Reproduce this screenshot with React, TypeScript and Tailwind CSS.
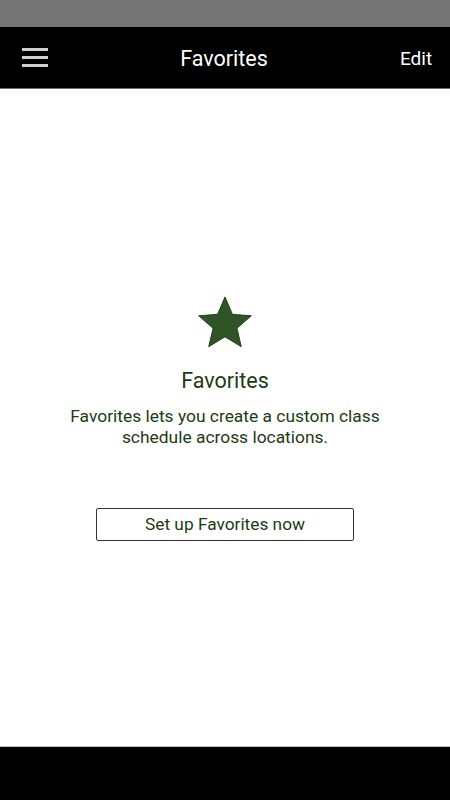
import React from "react";

export default function App() {
  return (
    <div className="flex h-[800px] w-[450px] flex-col bg-white" style={{ fontFamily: "Roboto, 'Liberation Sans', sans-serif" }}>
      <div className="h-[27px] bg-[#757575]" />
      <div className="flex h-[62px] items-center justify-between border-b border-[#6e6e6e] bg-black px-[18px] pt-[4px]">
        <div className="ml-[4px] flex w-[26px] flex-col gap-[5px] -mt-[4px]">
          <div className="h-[3px] w-[26px] bg-[#cfcfcf]" />
          <div className="h-[3px] w-[26px] bg-[#cfcfcf]" />
          <div className="h-[3px] w-[26px] bg-[#cfcfcf]" />
        </div>
        <div className="text-[21.5px] text-white">Favorites</div>
        <div className="w-[32px] text-right text-[19px] text-white">Edit</div>
      </div>
      <div className="flex flex-1 flex-col items-center pt-[206px]">
        <svg width="58" height="55" viewBox="0 0 24 23" className="block">
          <path
            d="M12 0.8 L15.1 8.1 L23 8.7 L17 13.9 L18.8 21.6 L12 17.5 L5.2 21.6 L7 13.9 L1 8.7 L8.9 8.1 Z"
            fill="#2f5526"
            stroke="#1e3a17"
            strokeWidth="0.4"
            strokeLinejoin="round"
          />
        </svg>
        <div className="mt-[17px] text-[21.5px] leading-[28px] text-[#1b3c12]">Favorites</div>
        <div className="mt-[11px] text-center text-[17.4px] leading-[21px] text-[#1b3c12]">
          Favorites lets you create a custom class
          <br />
          schedule across locations.
        </div>
        <button className="mt-[60px] h-[33px] w-[258px] rounded-[2px] border border-[#333] text-[17.3px] text-[#1b3c12]">
          Set up Favorites now
        </button>
      </div>
      <div className="h-[54px] border-t border-[#bdbdbd] bg-black" />
    </div>
  );
}
